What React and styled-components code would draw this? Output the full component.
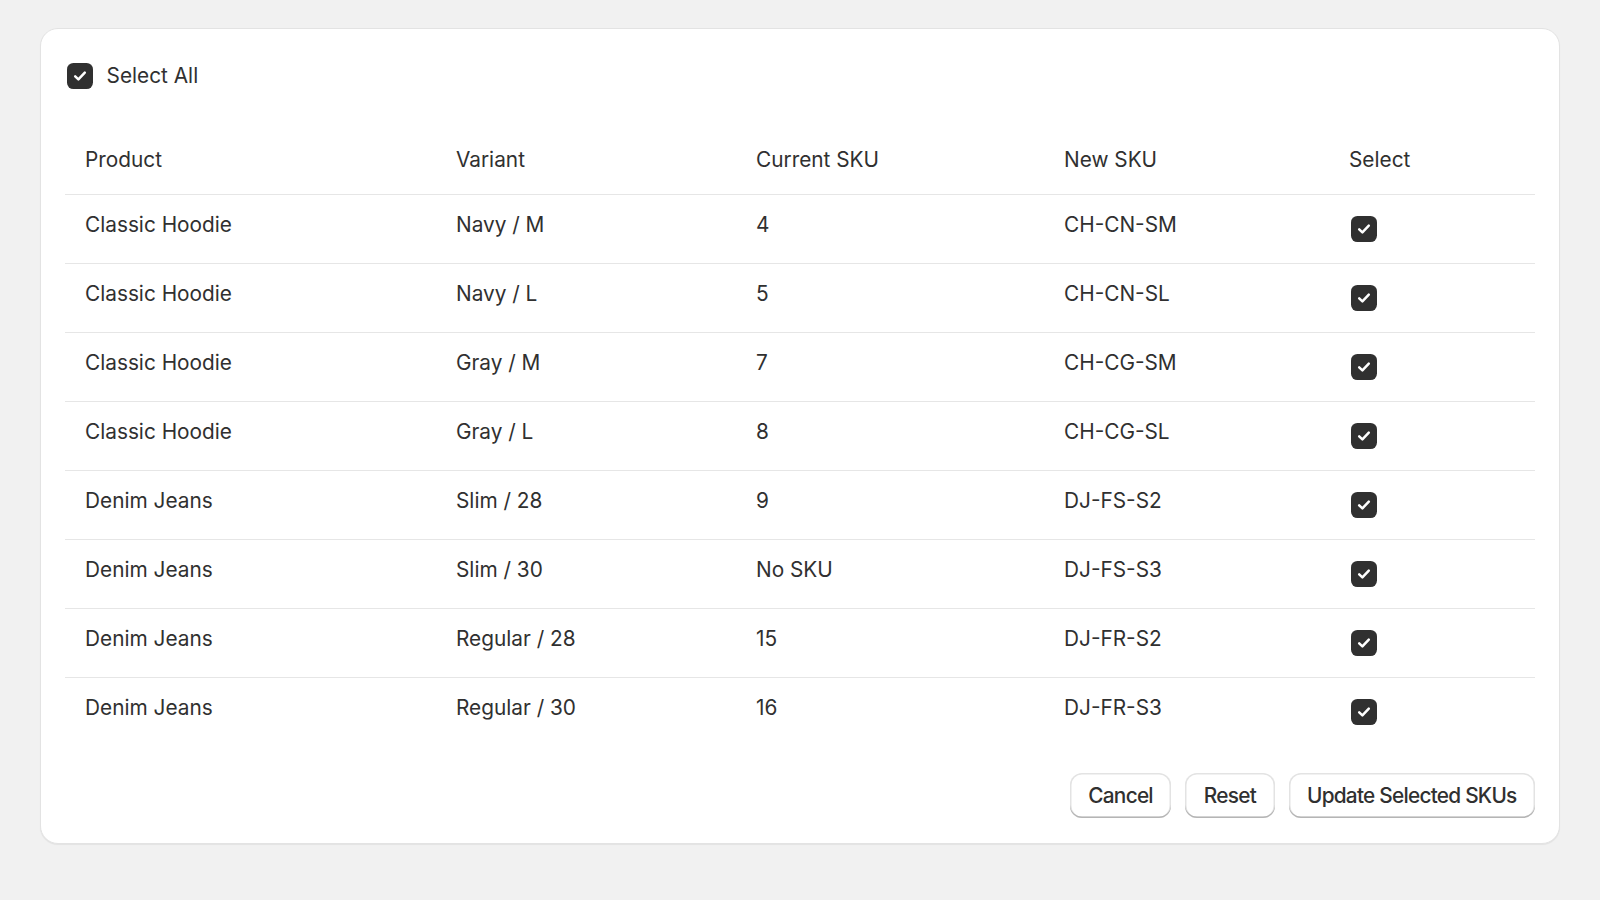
import React from 'react'
import styled, { createGlobalStyle } from 'styled-components'

const GlobalStyle = createGlobalStyle`
  html, body {
    margin: 0;
    padding: 0;
    background: #f1f1f1;
  }
  body {
    font-family: Inter, "Noto Sans", sans-serif;
    color: #303030;
  }
`

const Page = styled.div`
  padding: 28px 40px;
  min-height: 900px;
  box-sizing: border-box;
`

const Card = styled.div`
  background: #ffffff;
  border: 1px solid #e3e3e3;
  border-radius: 18px;
  box-shadow: 0 1px 1px rgba(0, 0, 0, 0.06);
  padding: 24px 24px 25px;
`

const TopBar = styled.label`
  display: flex;
  align-items: center;
  gap: 14px;
  height: 46px;
  padding-left: 2px;
  font-size: 20.8px;
  line-height: 26px;
`

const Table = styled.div`
  margin-top: 20px;
`

const Row = styled.div`
  display: grid;
  grid-template-columns: 371px 300px 308px 285px 1fr;
  box-sizing: border-box;
  height: ${(p) => (p.$head ? '75px' : '69px')};
  border-top: ${(p) => (p.$head ? 'none' : '1px solid #e6e6e6')};
`

const Cell = styled.div`
  padding: ${(p) => (p.$head ? '27.5px' : '16.5px')} 20px 0;
  font-size: 20.8px;
  line-height: 26px;
  white-space: nowrap;
`

const BoxCell = styled.div`
  padding: 21px 20px 0 22px;
`

const Box = styled.span`
  display: inline-flex;
  align-items: center;
  justify-content: center;
  width: 25.6px;
  height: 25.6px;
  border-radius: 6.4px;
  background: #303030;
  flex-shrink: 0;
`

const Footer = styled.div`
  display: flex;
  justify-content: flex-end;
  gap: 14px;
  margin-top: 27px;
`

const Button = styled.button`
  height: 45px;
  padding: 0 18.5px;
  border: none;
  border-radius: 12px;
  background: #ffffff;
  color: #303030;
  font-family: Inter, "Noto Sans", sans-serif;
  font-size: 20.8px;
  font-weight: 500;
  letter-spacing: -0.75px;
  box-shadow: inset 0 -1.5px 0 0 #b5b5b5, inset 0 0 0 1.5px #e3e3e3;
  cursor: pointer;
`

const Check = () => (
  <Box>
    <svg width="16" height="16" viewBox="0 0 16 16" fill="none">
      <path
        d="M3.2 8.4 L6.4 11.4 L12.8 4.6"
        stroke="#ffffff"
        strokeWidth="2.5"
        strokeLinecap="round"
        strokeLinejoin="round"
      />
    </svg>
  </Box>
)

const rows = [
  ['Classic Hoodie', 'Navy / M', '4', 'CH-CN-SM'],
  ['Classic Hoodie', 'Navy / L', '5', 'CH-CN-SL'],
  ['Classic Hoodie', 'Gray / M', '7', 'CH-CG-SM'],
  ['Classic Hoodie', 'Gray / L', '8', 'CH-CG-SL'],
  ['Denim Jeans', 'Slim / 28', '9', 'DJ-FS-S2'],
  ['Denim Jeans', 'Slim / 30', 'No SKU', 'DJ-FS-S3'],
  ['Denim Jeans', 'Regular / 28', '15', 'DJ-FR-S2'],
  ['Denim Jeans', 'Regular / 30', '16', 'DJ-FR-S3'],
]

export default function App() {
  return (
    <Page>
      <GlobalStyle />
      <Card>
        <TopBar>
          <Check />
          Select All
        </TopBar>
        <Table>
          <Row $head>
            <Cell $head>Product</Cell>
            <Cell $head>Variant</Cell>
            <Cell $head>Current SKU</Cell>
            <Cell $head>New SKU</Cell>
            <Cell $head>Select</Cell>
          </Row>
          {rows.map((r, i) => (
            <Row key={i}>
              <Cell>{r[0]}</Cell>
              <Cell>{r[1]}</Cell>
              <Cell>{r[2]}</Cell>
              <Cell>{r[3]}</Cell>
              <BoxCell>
                <Check />
              </BoxCell>
            </Row>
          ))}
        </Table>
        <Footer>
          <Button>Cancel</Button>
          <Button>Reset</Button>
          <Button>Update Selected SKUs</Button>
        </Footer>
      </Card>
    </Page>
  )
}
